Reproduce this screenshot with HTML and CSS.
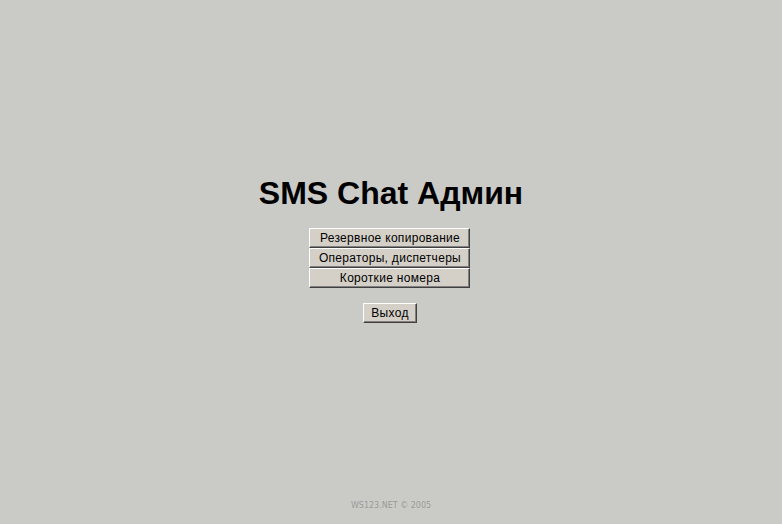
FILE: index.html
```html
<!DOCTYPE html>
<html lang="ru">
<head>
<meta charset="utf-8">
<title>SMS Chat Админ</title>
<link rel="stylesheet" href="styles.css">
</head>
<body>
<div class="page">
  <main class="main">
    <h1 class="title">SMS Chat Админ</h1>
    <div class="controls">
      <div class="menu">
        <button class="btn btn-menu">Резервное копирование</button>
        <button class="btn btn-menu">Операторы, диспетчеры</button>
        <button class="btn btn-menu">Короткие номера</button>
      </div>
      <button class="btn btn-exit">Выход</button>
    </div>
  </main>
  <footer class="footer">WS123.NET © 2005</footer>
</div>
</body>
</html>
```
FILE: styles.css
```css
html, body {
  margin: 0;
  padding: 0;
  background: #cacbc7;
}
.page {
  height: 524px;
  display: flex;
  flex-direction: column;
  align-items: center;
}
.main {
  flex: 1;
  display: flex;
  flex-direction: column;
  align-items: center;
  padding-top: 175px;
}
.title {
  margin: 0;
  font-family: "Liberation Sans", Arial, sans-serif;
  font-weight: bold;
  font-size: 32px;
  line-height: 36px;
  color: #000;
}
.controls {
  display: flex;
  flex-direction: column;
  align-items: center;
  padding-right: 2px;
}
.menu {
  margin-top: 17px;
  display: flex;
  flex-direction: column;
}
.btn {
  font-family: "Liberation Sans", Arial, sans-serif;
  font-size: 12px;
  letter-spacing: 0.3px;
  color: #000;
  background: #d4d0c8;
  border-style: solid;
  border-width: 1px;
  border-color: #ffffff #404040 #404040 #ffffff;
  box-shadow: inset -1px -1px 0 #808080;
  height: 20px;
  padding: 0 4px;
  margin: 0;
  line-height: 17px;
}
.btn-menu {
  width: 161px;
}
.btn-exit {
  margin-top: 15px;
  width: 54px;
}
.footer {
  font-family: "DejaVu Sans", Verdana, sans-serif;
  font-size: 8px;
  color: #9a9a9a;
  padding-bottom: 14px;
}
```
